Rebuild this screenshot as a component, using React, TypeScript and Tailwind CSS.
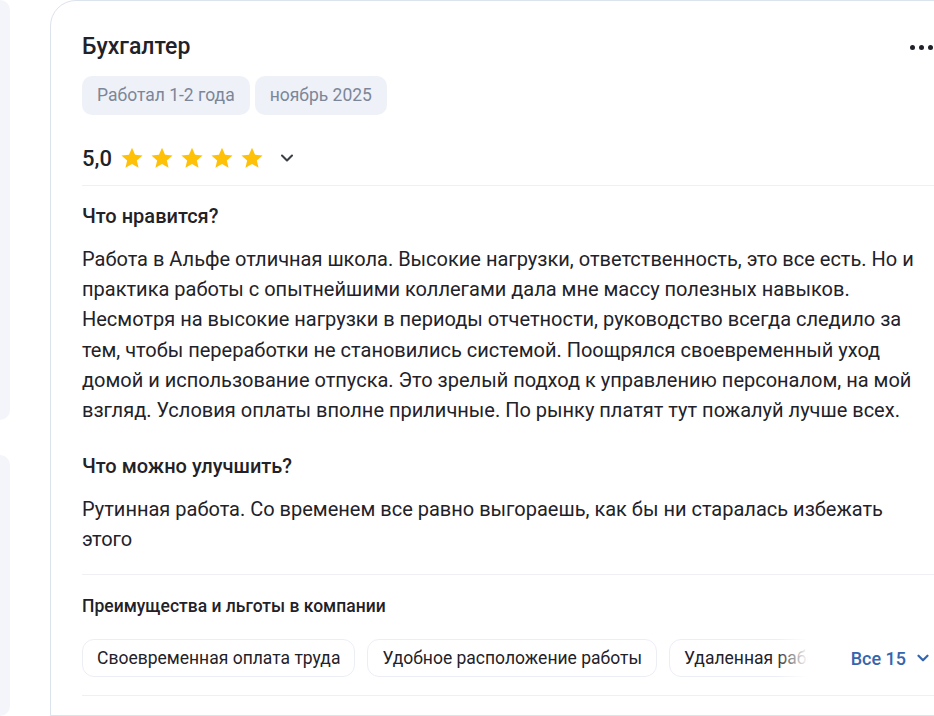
import { ChevronDown } from "lucide-react";

function Star() {
  return (
    <svg className="w-[24px] h-[24px]" viewBox="0 0 24 24" fill="#ffc107">
      <path d="M12 1.8l3.05 6.9 7.5.7-5.68 4.98 1.68 7.37L12 17.9l-6.55 3.85 1.68-7.37L1.45 9.4l7.5-.7L12 1.8z" />
    </svg>
  );
}

const perks = ["Своевременная оплата труда", "Удобное расположение работы", "Удаленная работа"];

export default function App() {
  return (
    <div className="w-[934px] h-[716px] overflow-hidden bg-white flex font-['Roboto',sans-serif] text-[#1f2229]">
      {/* left column stub */}
      <div className="w-[10px] shrink-0 flex flex-col gap-[35px]">
        <div className="h-[420px] bg-[#f4f5fa] rounded-r-[16px]" />
        <div className="flex-1 bg-[#f4f5fa] rounded-r-[16px]" />
      </div>

      <div className="w-[40px] shrink-0" />

      {/* review card */}
      <div className="w-[920px] shrink-0 border border-[#dde3ec] rounded-t-[26px] pl-[31px] pr-[34px] pt-[28px]">
        <div className="w-[852px]">
          <div className="flex items-center justify-between h-[36px]">
            <h2 className="text-[23px] font-medium leading-[36px]">Бухгалтер</h2>
            <div className="flex gap-[4px] pr-[1px]">
              <span className="w-[5px] h-[5px] rounded-full bg-[#1f2229]" />
              <span className="w-[5px] h-[5px] rounded-full bg-[#1f2229]" />
              <span className="w-[5px] h-[5px] rounded-full bg-[#1f2229]" />
            </div>
          </div>

          <div className="flex gap-[5px] mt-[11px]">
            <span className="h-[39px] px-[15px] flex items-center rounded-[10px] bg-[#eef1f7] text-[#7c8699] text-[17.5px]">Работал 1-2 года</span>
            <span className="h-[39px] px-[15px] flex items-center rounded-[10px] bg-[#eef1f7] text-[#7c8699] text-[17.5px]">ноябрь 2025</span>
          </div>

          <div className="flex items-center mt-[24px] h-[38px]">
            <span className="text-[22px] font-medium mr-[8px]">5,0</span>
            <div className="flex gap-[6px]">
              <Star />
              <Star />
              <Star />
              <Star />
              <Star />
            </div>
            <ChevronDown className="w-[20px] h-[20px] ml-[13px] text-[#3a3f47]" strokeWidth={2.5} />
          </div>

          <div className="h-px bg-[#eef0f4] mt-[8px]" />

          <h3 className="text-[20px] font-medium mt-[17px] leading-[26px]">Что нравится?</h3>
          <p className="text-[20px] leading-[30.2px] mt-[15px]">
            Работа в Альфе отличная школа. Высокие нагрузки, ответственность, это все есть. Но и практика работы с опытнейшими коллегами дала мне массу полезных навыков. Несмотря на высокие нагрузки в периоды отчетности, руководство всегда следило за тем, чтобы переработки не становились системой. Поощрялся своевременный уход домой и использование отпуска. Это зрелый подход к управлению персоналом, на мой взгляд. Условия оплаты вполне приличные. По рынку платят тут пожалуй лучше всех.
          </p>

          <h3 className="text-[20px] font-medium mt-[28px] leading-[26px]">Что можно улучшить?</h3>
          <p className="text-[20px] leading-[30px] mt-[15px]">
            Рутинная работа. Со временем все равно выгораешь, как бы ни старалась избежать этого
          </p>

          <div className="h-px bg-[#eef0f4] mt-[20px]" />

          <h4 className="text-[17.5px] font-medium mt-[19px] leading-[24px]">Преимущества и льготы в компании</h4>

          <div className="flex items-center mt-[21px]">
            <div className="relative w-[726px] overflow-hidden">
              <div className="flex gap-[12px]">
                {perks.map((p) => (
                  <span key={p} className="shrink-0 h-[38px] px-[14px] flex items-center rounded-[12px] border border-[#eceef5] text-[17.5px] whitespace-nowrap">
                    {p}
                  </span>
                ))}
              </div>
              <div className="absolute right-0 top-0 h-full w-[32px] bg-gradient-to-r from-transparent to-white" />
            </div>
            <button className="ml-auto flex items-center gap-[8px] pr-[2px] text-[#3566ad] text-[18px] font-medium">
              Все 15
              <ChevronDown className="w-[18px] h-[18px]" strokeWidth={3} />
            </button>
          </div>

          <div className="h-px bg-[#eef0f4] mt-[18px]" />
        </div>
      </div>
    </div>
  );
}
